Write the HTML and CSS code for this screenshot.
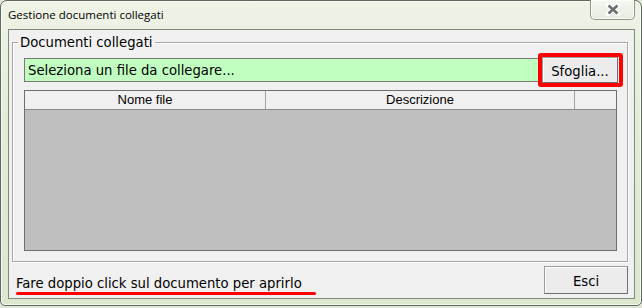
FILE: index.html
```html
<!DOCTYPE html>
<html lang="it">

<head>
    <meta charset="UTF-8">
    <title>Gestione documenti collegati</title>
    <link rel="stylesheet" href="styles.css">
</head>

<body>
    <div class="window">
        <div class="titlebar">
            <span class="title">Gestione documenti collegati</span>
            <button class="close" title="Chiudi">
                <svg width="18" height="13" viewBox="0 0 18 13">
                    <path d="M4 2 L14 11 M14 2 L4 11" stroke="#fff" stroke-width="5" stroke-linecap="round" fill="none" />
                    <path d="M4.5 2.5 L13.5 10.5 M13.5 2.5 L4.5 10.5" stroke="#6b6f72" stroke-width="2.6" fill="none" />
                </svg>
            </button>
        </div>

        <div class="client">
            <fieldset class="group">
                <legend>Documenti collegati</legend>

                <div class="picker">
                    <div class="file-box">Seleziona un file da collegare...</div>
                    <!-- red frame drawn round the browse button -->
                    <div class="highlight">
                        <button class="btn btn-browse">Sfoglia...</button>
                    </div>
                </div>

                <div class="grid">
                    <div class="grid-head">
                        <div class="col col-name">Nome file</div>
                        <div class="col col-desc">Descrizione</div>
                        <div class="col col-extra"></div>
                    </div>
                    <div class="grid-body"></div>
                </div>
            </fieldset>

            <div class="bottom">
                <span class="hint">Fare doppio click sul documento per aprirlo</span>
                <button class="btn btn-exit">Esci</button>
            </div>
        </div>
    </div>
</body>

</html>
```

FILE: styles.css
```css
:root {
    --face: #f0f0f0;
    --frame-line: #7f8a7c;
    --green-field: #c0ffc0;
    --grid-gray: #bfbfbf;
    --mark-red: #ff0000;
}

* {
    margin: 0;
    padding: 0;
    box-sizing: border-box;
}

body {
    width: 642px;
    height: 308px;
    overflow: hidden;
    font-family: 'DejaVu Sans Condensed', 'DejaVu Sans', sans-serif;
    color: #000;
    background-color: #dfe6d6;
}

.window {
    height: 306px;
    border: 1px solid #5f6a5d;
    border-radius: 7px 7px 5px 5px;
    background: linear-gradient(180deg, #eef3e6 0%, #e4ecd8 40%, #dde6cf 100%);
    box-shadow: inset 0 0 0 1px rgba(255, 255, 255, 0.7);
    display: flex;
    flex-direction: column;
}

.titlebar {
    height: 28px;
    display: flex;
    align-items: flex-start;
    justify-content: space-between;
    padding-left: 7px;
    padding-right: 6px;
}

.title {
    font-family: 'Open Sans', 'Liberation Sans', sans-serif;
    font-size: 11.5px;
    margin-top: 6px;
    color: #000;
}

.close {
    width: 45px;
    height: 20px;
    margin-top: -1px;
    border: 1px solid #8e978b;
    border-top: none;
    border-radius: 0 0 5px 5px;
    background: linear-gradient(180deg, #f5f7f1 0%, #e6ebdf 100%);
    box-shadow: inset 0 0 0 1px rgba(255, 255, 255, 0.8);
    display: flex;
    align-items: center;
    justify-content: center;
}

.client {
    flex: 1;
    margin: 0 6px 6px 7px;
    border: 1px solid var(--frame-line);
    background-color: var(--face);
    padding: 0 6px 0 3px;
    display: flex;
    flex-direction: column;
}

/* group box */
.group {
    margin-top: 3px;
    height: 229px;
    border: 1px solid #a8a8a8;
    box-shadow: inset 1px 1px 0 #fff, 1px 1px 0 #fff;
    padding: 2px 4px 0 11px;
}

.group legend {
    font-size: 14.7px;
    margin-left: -6px;
    padding: 0 2px 0 2px;
    line-height: 18px;
}

.picker {
    display: flex;
    align-items: center;
    height: 34px;
}

.file-box {
    flex: 1;
    height: 24px;
    background-color: var(--green-field);
    border: 1px solid #7a7a7a;
    border-right-color: #9a9a9a;
    font-size: 14.7px;
    line-height: 22px;
    padding-left: 3px;
}

.highlight {
    margin-left: -1px;
    border: 4px solid var(--mark-red);
    border-radius: 3px;
    padding: 0 1px 0 0;
}

.btn {
    font-family: 'DejaVu Sans Condensed', 'DejaVu Sans', sans-serif;
    font-size: 14.7px;
    color: #000;
    background-color: #ececec;
    border: 1px solid #9c9c9c;
    border-right-color: #6f6f6f;
    border-bottom-color: #6f6f6f;
    box-shadow: inset 1px 1px 0 #fff;
    cursor: pointer;
}

.btn-browse {
    display: block;
    width: 76px;
    height: 26px;
}

/* list of linked files */
.grid {
    margin-top: 3px;
    margin-right: 6px;
    height: 161px;
    border: 1px solid #6e6e6e;
    display: flex;
    flex-direction: column;
}

.grid-head {
    height: 19px;
    display: flex;
    background-color: var(--face);
    border-bottom: 1px solid #8a8a8a;
    font-family: 'Liberation Sans', Arial, sans-serif;
    font-size: 13px;
    line-height: 18px;
}

.col {
    text-align: center;
    border-right: 1px solid #a0a0a0;
}

.col-name {
    width: 241px;
}

.col-desc {
    width: 309px;
}

.col-extra {
    flex: 1;
    border-right: none;
}

.grid-body {
    flex: 1;
    background-color: var(--grid-gray);
}

.bottom {
    flex: 1;
    display: flex;
    align-items: center;
    justify-content: space-between;
    padding-left: 4px;
    padding-right: 0;
}

.hint {
    position: relative;
    font-size: 14.7px;
    margin-top: 5px;
}

/* hand-drawn red underline */
.hint::after {
    content: "";
    position: absolute;
    left: 0;
    right: -14px;
    bottom: -4px;
    height: 3px;
    border-radius: 2px;
    background-color: var(--mark-red);
}

.btn-exit {
    width: 84px;
    height: 28px;
    margin-top: 0;
}
```
